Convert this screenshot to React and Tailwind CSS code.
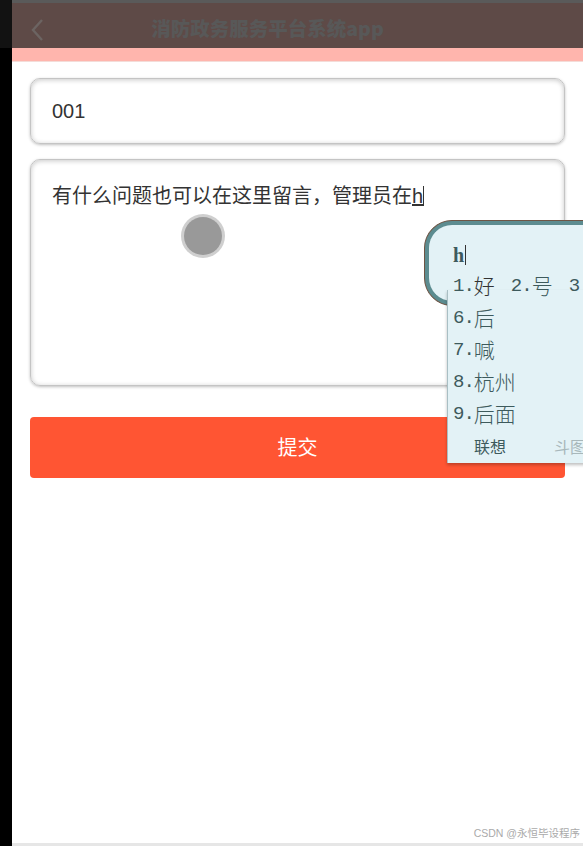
import React from "react";

const sans = { fontFamily: '"Liberation Sans", "Noto Sans CJK SC", sans-serif' };

// candidate list rows in the IME popup
const candidates = [
  ["6.", "后"],
  ["7.", "喊"],
  ["8.", "杭州"],
  ["9.", "后面"],
];

const Candidate = ({ num, word }) => (
  <div className="flex items-center h-[32px]">
    <span className="text-[19px] font-['Liberation_Mono',monospace] tracking-[-1px]">{num}</span>
    <span className="text-[21px] font-['Noto_Sans_CJK_SC',sans-serif] font-light">{word}</span>
  </div>
);

const App = () => {
  return (
    <div className="relative flex w-[583px] h-[846px] overflow-hidden bg-white" style={sans}>
      {/* left dark strip */}
      <div className="flex flex-col w-[12px] shrink-0">
        <div className="h-[48px] bg-[#121212]" />
        <div className="flex-1 bg-black" />
      </div>

      <div className="flex flex-col flex-1">
        {/* header */}
        <div className="h-[48px] bg-[#5e4a47] border-t-[3px] border-[#5a5a5a] relative flex items-center justify-center">
          <svg className="absolute left-[18px] top-[15px]" width="14" height="24" viewBox="0 0 14 24">
            <path d="M12 2 L3 12 L12 22" fill="none" stroke="#6c6462" strokeWidth="2.4" />
          </svg>
          <span className="text-[19.5px] font-black text-[#585858] ml-[-60px] mt-[5px] font-['Noto_Sans_CJK_SC',sans-serif]">
            消防政务服务平台系统app
          </span>
        </div>
        <div className="h-[14px] bg-[#ffb5ad] border-b border-[#f4dcd8]" />

        <div className="flex flex-col flex-1 px-[18px] pt-[16px]">
          <div className="h-[66px] rounded-[10px] border border-[#c4c4c4] shadow-[inset_0_1px_5px_rgba(0,0,0,0.22),0_1px_3px_rgba(0,0,0,0.25)] flex items-center px-[21px] text-[20px] text-[#333]">
            001
          </div>

          <div className="mt-[15px] h-[227px] rounded-[10px] border border-[#c4c4c4] shadow-[inset_0_1px_5px_rgba(0,0,0,0.22),0_1px_3px_rgba(0,0,0,0.25)] px-[21px] pt-[21px] text-[20px] text-[#333]">
            <span>有什么问题也可以在这里留言，管理员在</span>
            <span className="underline">h</span>
            <span className="inline-block w-[1px] h-[20px] bg-[#333] align-[-3px]" />
          </div>

          <button className="mt-[31px] h-[61px] rounded-[4px] bg-[#ff5533] text-white text-[20px]">
            提交
          </button>

          <div className="flex-1" />
          <div className="text-right text-[10.5px] leading-[13px] text-[#aaa] -mr-[15px] pb-[3px]">CSDN @永恒毕设程序</div>
          <div className="h-[3px] bg-[#e6e6e6] -mx-[18px]" />
        </div>
      </div>

      {/* touch indicator */}
      <div className="absolute left-[181px] top-[214px] w-[44px] h-[44px] rounded-full bg-[#cfcfcf] flex items-center justify-center">
        <div className="w-[38px] h-[38px] rounded-full bg-[#999]" />
      </div>

      {/* IME popup */}
      <div className="absolute left-[424px] top-[220px] w-[200px] h-[250px] text-[#3d5a5c]">
        <div className="absolute inset-x-0 top-0 h-[86px] rounded-l-[28px] border-[1px] border-[#6e5444] bg-[#6e5444]">
          <div className="h-full rounded-l-[27px] border-l-[4px] border-y-[4px] border-[#5c8c90] bg-[#e3f2f6]" />
        </div>
        <div className="absolute left-[23px] top-[70px] right-0 h-[173px] bg-[#e3f2f6] border-l border-[#a9bfc4] shadow-[0_2px_3px_rgba(0,0,0,0.25)]" />
        <div className="absolute left-[29px] top-[20px] flex flex-col">
          <div className="flex items-center h-[30px] text-[20px] font-bold font-['Liberation_Serif',serif]">
            h<span className="inline-block w-[1px] h-[20px] bg-[#333] ml-[1px]" />
          </div>
          <div className="flex items-center h-[32px] whitespace-nowrap">
            <span className="text-[19px] font-['Liberation_Mono',monospace] tracking-[-1px]">1.</span>
            <span className="text-[21px] font-['Noto_Sans_CJK_SC',sans-serif] font-light text-[#333]">好</span>
            <span className="ml-[16px] text-[19px] font-['Liberation_Mono',monospace] tracking-[-1px]">2.</span>
            <span className="text-[21px] font-['Noto_Sans_CJK_SC',sans-serif] font-light">号</span>
            <span className="ml-[16px] text-[19px] font-['Liberation_Mono',monospace]">3</span>
          </div>
          {candidates.map(([n, w]) => (
            <Candidate key={n} num={n} word={w} />
          ))}
          <div className="flex items-center h-[36px] text-[16px]">
            <span className="ml-[21px] text-[#3d5a5c]">联想</span>
            <span className="ml-[48px] text-[#a8b8bb]">斗图</span>
          </div>
        </div>
      </div>
    </div>
  );
};

export default App;
